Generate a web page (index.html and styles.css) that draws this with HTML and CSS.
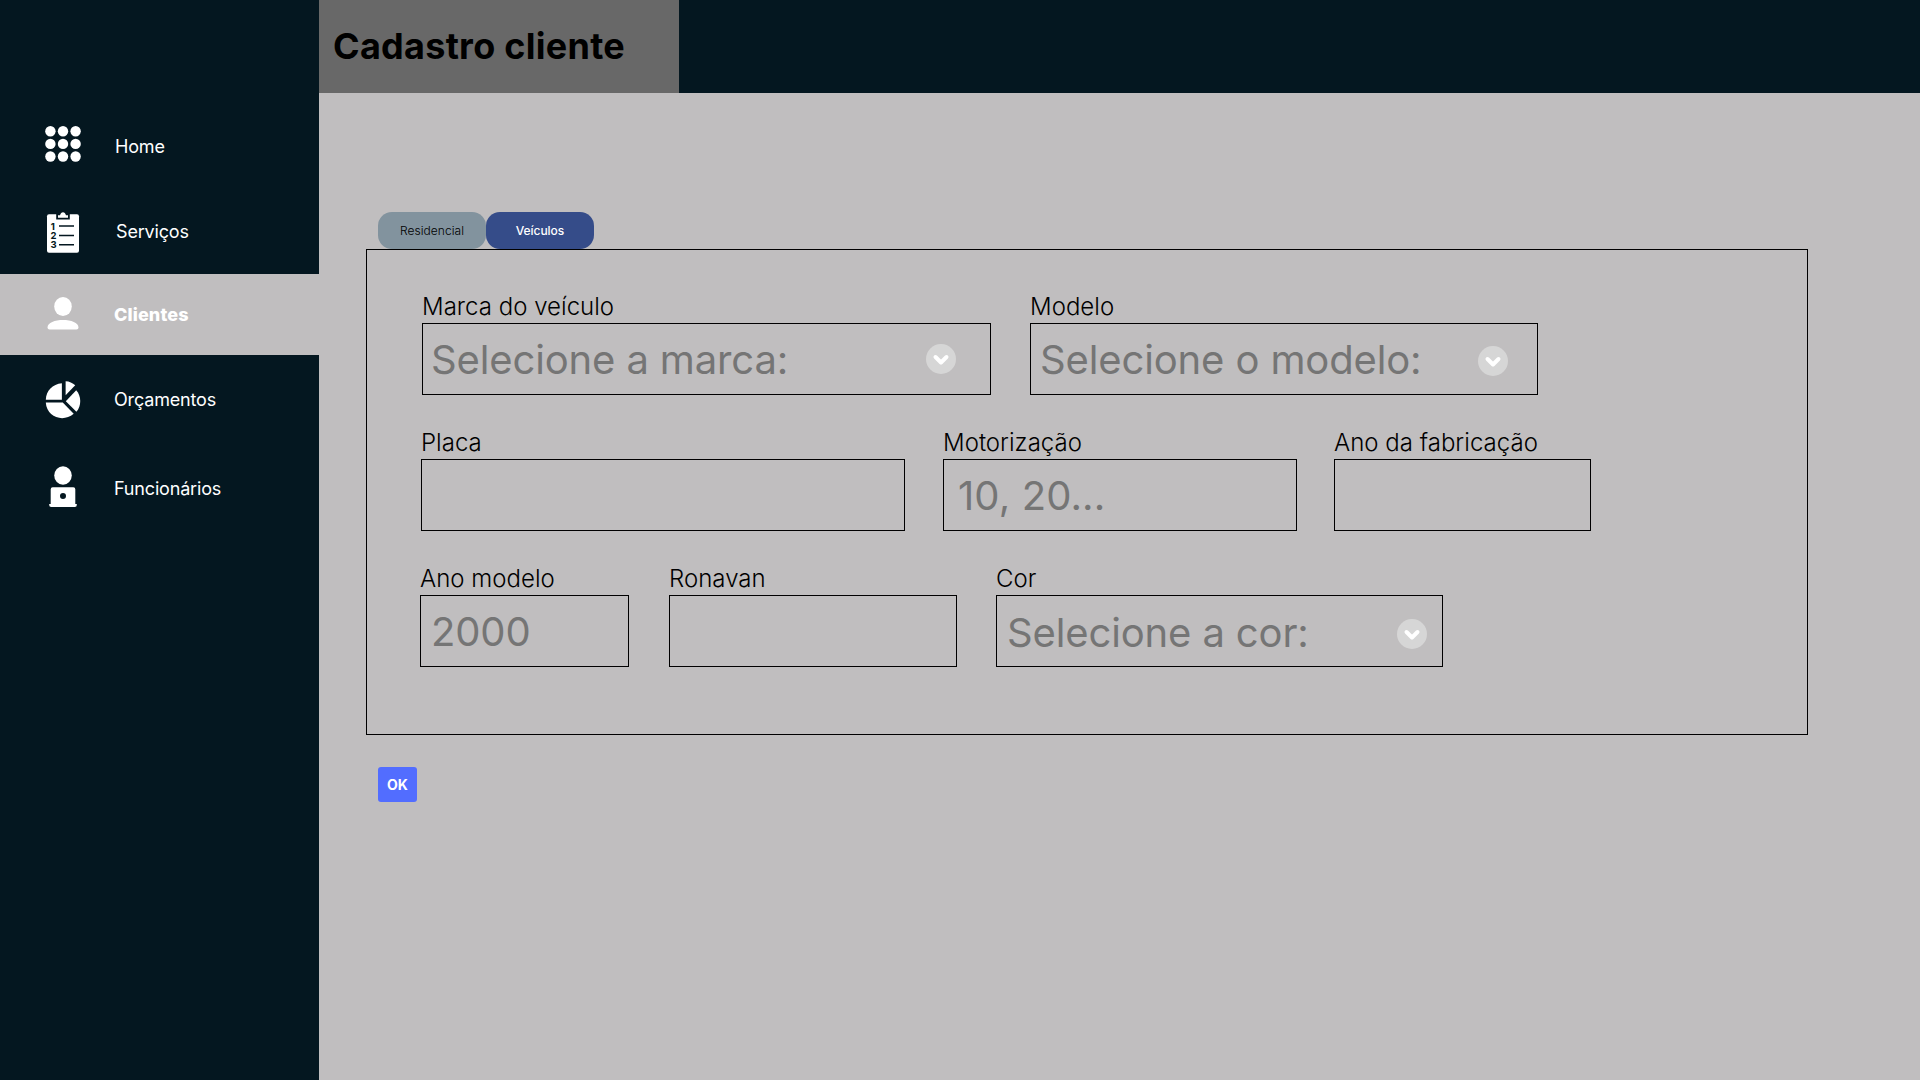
FILE: index.html
```html
<!DOCTYPE html>
<html lang="pt-BR">
<head>
<meta charset="utf-8">
<title>Cadastro cliente</title>
<link rel="stylesheet" href="styles.css">
</head>
<body>
<div class="app">
  <nav class="sidebar">
    <a class="nav-item nav-home">
      <svg class="nav-icon" viewBox="0 0 44 44" fill="#fff">
        <circle cx="9.4" cy="7.3" r="5.2"/><circle cx="22" cy="7.3" r="5.2"/><circle cx="34.6" cy="7.3" r="5.2"/>
        <circle cx="9.4" cy="19.9" r="5.2"/><circle cx="22" cy="19.9" r="5.2"/><circle cx="34.6" cy="19.9" r="5.2"/>
        <circle cx="9.4" cy="32.5" r="5.2"/><circle cx="22" cy="32.5" r="5.2"/><circle cx="34.6" cy="32.5" r="5.2"/>
      </svg>
      <span class="nav-label">Home</span>
    </a>
    <a class="nav-item nav-services">
      <svg class="nav-icon" viewBox="0 0 44 44">
        <rect x="6" y="4.3" width="32" height="38.4" rx="2" fill="#fff"/>
        <path d="M15.2 3.5h13.6v6H15.2z" fill="#041720"/>
        <path d="M17 7.8V5.2h2c.6-2 1.6-3 3-3s2.4 1 3 3h2v2.6z" fill="#fff"/>
        <path d="M18 16.1h15M18 25.4h15M18 34.7h15" stroke="#041720" stroke-width="1.5"/>
        <g class="list-number"><text x="9.8" y="19.5">1</text><text x="9.5" y="28.8">2</text><text x="9.5" y="38">3</text></g>
      </svg>
      <span class="nav-label">Serviços</span>
    </a>
    <a class="nav-item nav-clients">
      <svg class="nav-icon nav-icon-tall" viewBox="0 0 44 45" fill="#fff">
        <ellipse cx="22" cy="14.5" rx="8.8" ry="9.4"/>
        <path d="M8.500 37.600c-1 0-2-1-2-2C6.500 30.500 14 28 22 28s15.500 2.500 15.500 7.600c0 1-1 2-2 2z"/>
      </svg>
      <span class="nav-label">Clientes</span>
    </a>
    <a class="nav-item nav-quotes">
      <svg class="nav-icon" viewBox="0 0 44 44" fill="#fff">
        <path d="M4.800 21.800C5 13 11.500 6 20.900 5.300V21.800z"/>
        <path d="M24.600 3.300c3.800.2 7 1.600 9.600 4L24.600 17.300z"/>
        <path d="M24.800 23.200L35.200 12.200C40.500 18 40.600 28 35.400 33.800z"/>
        <path d="M4.800 24.600H21.800L32.700 35.800C22 45 5.600 39 4.800 24.600z"/>
      </svg>
      <span class="nav-label">Orçamentos</span>
    </a>
    <a class="nav-item nav-staff">
      <svg class="nav-icon nav-icon-tall" viewBox="0 0 44 45" fill="#fff">
        <ellipse cx="22" cy="9.5" rx="8.8" ry="9.3"/>
        <path fill-rule="evenodd" d="M11.700 21.300h20.600q2 0 2 2V38h1.500v1q0 2-2 2H10.200q-2 0-2-2v-1h1.500V23.300q0-2 2-2zM22 27a3 3 0 1 0 0 6 3 3 0 0 0 0-6z"/>
      </svg>
      <span class="nav-label">Funcionários</span>
    </a>
  </nav>
  <div class="content">
    <header class="topbar"><h1 class="page-title">Cadastro cliente</h1></header>
    <main class="main">
      <div class="tabs">
        <button class="tab">Residencial</button>
        <button class="tab tab-active">Veículos</button>
      </div>
      <section class="panel">
        <div class="row row-brand">
          <div class="field field-brand"><label class="label">Marca do veículo</label>
            <div class="control"><span class="hint">Selecione a marca:</span>
              <svg class="chevron" viewBox="0 0 30 30"><circle cx="15" cy="15" r="15"/><path d="M9.500 13l5.500 5.500 5.500-5.500"/></svg></div></div>
          <div class="field field-model"><label class="label">Modelo</label>
            <div class="control"><span class="hint">Selecione o modelo:</span>
              <svg class="chevron" viewBox="0 0 30 30"><circle cx="15" cy="15" r="15"/><path d="M9.500 13l5.500 5.500 5.500-5.500"/></svg></div></div>
        </div>
        <div class="row row-plate">
          <div class="field field-plate"><label class="label">Placa</label><div class="control"></div></div>
          <div class="field field-engine"><label class="label">Motorização</label>
            <div class="control"><span class="hint">10, 20...</span></div></div>
          <div class="field field-built"><label class="label">Ano da fabricação</label><div class="control"></div></div>
        </div>
        <div class="row row-year">
          <div class="field field-year"><label class="label">Ano modelo</label>
            <div class="control"><span class="hint">2000</span></div></div>
          <div class="field field-code"><label class="label">Ronavan</label><div class="control"></div></div>
          <div class="field field-color"><label class="label">Cor</label>
            <div class="control"><span class="hint">Selecione a cor:</span>
              <svg class="chevron" viewBox="0 0 30 30"><circle cx="15" cy="15" r="15"/><path d="M9.500 13l5.500 5.500 5.500-5.500"/></svg></div></div>
        </div>
      </section>
      <button class="submit">OK</button>
    </main>
  </div>
</div>
</body>
</html>
```
FILE: styles.css
```css
* { box-sizing: border-box; }
body { margin: 0; font-family: Inter, "Liberation Sans", sans-serif; background: #c0bebf; color: #000; }
.app { display: flex; width: 1920px; height: 1080px; overflow: hidden; }
.sidebar { flex: none; width: 319px; padding-top: 102px; background: #041720; }
.nav-item { display: flex; align-items: center; gap: 29px; padding-left: 41px; color: #fff; font-size: 18px; font-weight: 400; line-height: 22px; letter-spacing: -0.17px; }
.nav-icon { flex: none; width: 44px; height: 44px; }
.nav-icon-tall { height: 45px; }
.nav-label { white-space: nowrap; }
.nav-home { height: 88px; gap: 30px; }
.nav-home .nav-label { padding-top: 1px; }
.nav-services { height: 84px; gap: 31px; }
.nav-clients { height: 81px; background: #c0bebf; font-weight: 800; letter-spacing: 0.12px; }
.nav-quotes { height: 90px; }
.nav-staff { height: 87px; }
.list-number { font-size: 9.5px; font-weight: 700; letter-spacing: 0; fill: #041720; }

.content { flex: 1; display: flex; flex-direction: column; }
.topbar { display: flex; height: 93px; background: #041720; }
.page-title { width: 360px; margin: 0; padding-left: 14px; background: #686868; font-size: 36px; line-height: 93px; font-weight: 700; letter-spacing: 0.27px; white-space: nowrap; }
.main { padding: 119px 112px 0 47px; }
.tabs { display: flex; padding-left: 12px; height: 37px; }
.tab { width: 108px; height: 37px; padding: 0; border: 0; border-radius: 14px; background: #82939e; color: #000; font: 300 12px/37px Inter, sans-serif; letter-spacing: 0.05px; }
.tab-active { background: #354c89; color: #fff; font-weight: 500; letter-spacing: -0.05px; }

.panel { display: flex; flex-direction: column; gap: 31px; height: 486px; padding: 40px 0 0 53px; border: 1px solid #000; }
.row { display: flex; }
.row-brand { gap: 39px; padding-left: 2px; }
.row-plate { gap: 38px; padding-left: 1px; }
.row-year { gap: 40px; }
.label { display: block; font-size: 24px; font-weight: 300; line-height: 34px; margin-bottom: -1px; letter-spacing: 0.02px; white-space: nowrap; }
.control { display: flex; align-items: center; justify-content: space-between; height: 72px; padding: 0 34px 0 8px; border: 1px solid #000; }
.hint { padding-top: 2px; color: #757575; font-size: 40px; line-height: 48px; letter-spacing: -0.13px; white-space: nowrap; }
.chevron { flex: none; width: 30px; height: 30px; }
.chevron circle { fill: #d6d6d6; }
.chevron path { fill: none; stroke: #fff; stroke-width: 4; stroke-linecap: round; stroke-linejoin: round; }
.field-brand { width: 569px; }
.field-model { width: 508px; }
.field-model .control { padding: 0 29px 0 9px; }
.field-model .chevron { margin-top: 4px; }
.field-plate { width: 484px; }
.field-engine { width: 354px; }
.field-engine .control { padding-left: 14px; }
.field-engine .hint { letter-spacing: 0.1px; }
.field-built { width: 257px; margin-left: -1px; }
.field-year { width: 209px; }
.field-year .control { padding: 0 0 0 10px; }
.field-code { width: 288px; }
.field-color { width: 447px; margin-left: -1px; }
.field-color .control { padding: 1px 15px 0 10px; }
.field-color .chevron { margin-top: 5px; }

.submit { display: block; width: 39px; height: 35px; margin: 32px 0 0 12px; padding: 0; border: 0; border-radius: 3px; background: #526dff; color: #fff; font: 700 14px/35px Inter, sans-serif; }
```
